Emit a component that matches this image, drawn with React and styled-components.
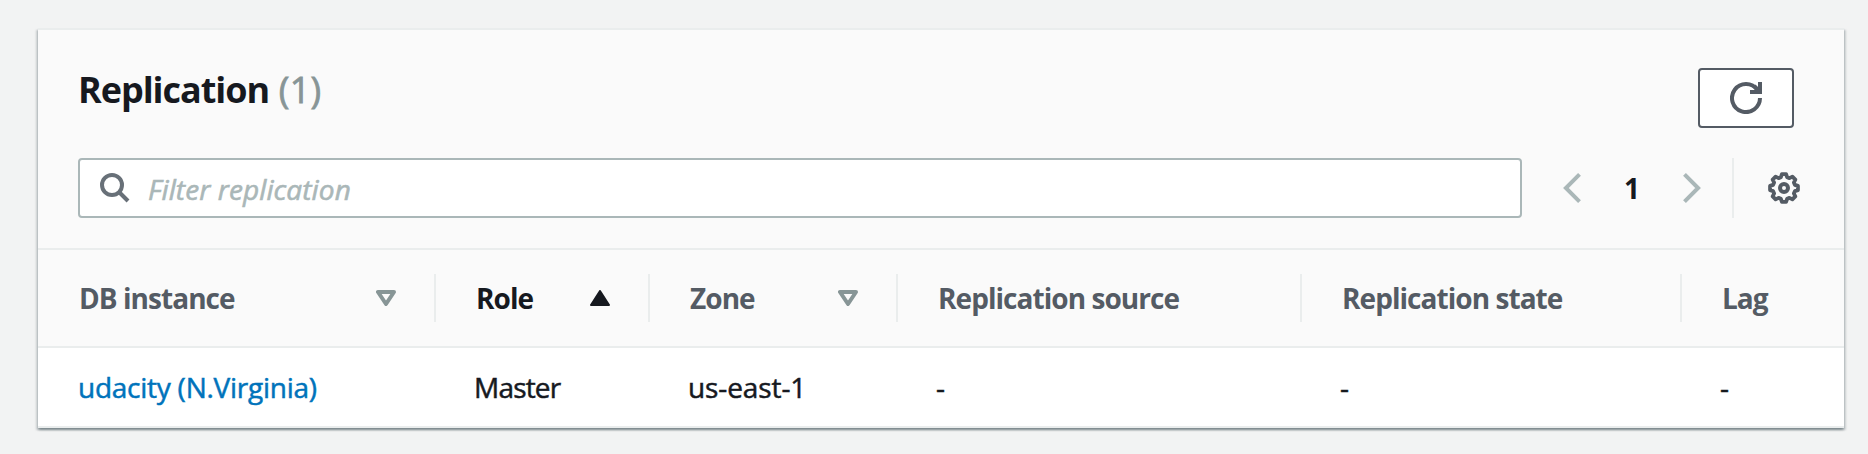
import React from "react";
import styled, { createGlobalStyle } from "styled-components";

const GlobalStyle = createGlobalStyle`
  * { box-sizing: border-box; }
  body {
    margin: 0;
    background: #f2f3f3;
    color: #16191f;
    font-family: "Open Sans", "Noto Sans", sans-serif;
    font-size: 28px;
    line-height: 44px;
  }
`;

const Page = styled.main`
  height: 454px;
  padding: 28px 24px 0 38px;
`;

const Card = styled.section`
  border-top: 2px solid #eaeded;
  background: #fff;
  box-shadow: 0 2px 2px 0 rgba(0, 28, 36, 0.3), 2px 2px 2px 0 rgba(0, 28, 36, 0.15),
    -2px 2px 2px 0 rgba(0, 28, 36, 0.15);
`;

const Header = styled.header`
  height: 220px;
  padding: 38px 40px 0;
  background: #fafafa;
  border-bottom: 2px solid #eaeded;
`;

const TitleRow = styled.div`
  display: flex;
  justify-content: space-between;
  align-items: flex-start;
  padding-right: 10px;
`;

const Title = styled.h2`
  margin: 0;
  font-size: 36px;
  line-height: 43px;
  font-weight: 700;
  letter-spacing: -1.05px;
  word-spacing: 1.5px;
`;

const Counter = styled.span`
  color: #879596;
  font-weight: 400;
  letter-spacing: 0.2px;
  -webkit-text-stroke: 0.8px #879596;
`;

const RefreshButton = styled.button`
  display: flex;
  align-items: center;
  justify-content: center;
  width: 96px;
  height: 60px;
  padding: 0;
  border: 2px solid #545b64;
  border-radius: 4px;
  background: #fff;
  color: #545b64;
`;

const Toolbar = styled.div`
  display: flex;
  align-items: center;
  height: 60px;
  margin-top: 30px;
`;

const SearchBox = styled.label`
  display: flex;
  align-items: center;
  width: 1444px;
  height: 60px;
  padding-left: 20px;
  border: 2px solid #aab7b8;
  border-radius: 4px;
  background: #fff;
  color: #687078;
`;

const SearchInput = styled.input`
  flex: 1;
  height: 46px;
  margin-left: 18px;
  padding: 2px 0 0;
  border: 0;
  outline: 0;
  background: transparent;
  font: inherit;
  letter-spacing: 0.1px;
  &::placeholder {
    color: #aab7b8;
    font-style: italic;
    opacity: 1;
    -webkit-text-stroke: 0.6px #aab7b8;
  }
`;

const Pagination = styled.nav`
  display: flex;
  align-items: center;
  justify-content: space-between;
  width: 138px;
  margin: 0 1px 0 41px;
  color: #aab7b8;
`;

const PageNumber = styled.span`
  color: #16191f;
  font-weight: 700;
`;

const Settings = styled.div`
  display: flex;
  align-items: center;
  height: 60px;
  margin-left: 30px;
  padding-left: 34px;
  border-left: 2px solid #eaeded;
  color: #545b64;
`;

const GRID = "398px 214px 248px 404px 380px 1fr";

const HeadRow = styled.div`
  display: grid;
  grid-template-columns: ${GRID};
  align-items: center;
  height: 98px;
  background: #fafafa;
  border-bottom: 2px solid #eaeded;
`;

const HeadCell = styled.div`
  display: flex;
  align-items: center;
  justify-content: space-between;
  height: 48px;
  padding: 0 38px 0 ${(p) => (p.$first ? 41 : 40)}px;
  border-right: ${(p) => (p.$last ? "0" : "2px solid #eaeded")};
  color: ${(p) => (p.$active ? "#16191f" : "#545b64")};
  font-weight: 700;
  letter-spacing: -0.95px;
  white-space: nowrap;
`;

const BodyRow = styled.div`
  display: grid;
  grid-template-columns: ${GRID};
  align-items: center;
  height: 80px;
  border-bottom: 2px solid #eaeded;
`;

const BodyCell = styled.div`
  padding-left: ${(p) => (p.$first ? 40 : 38)}px;
  letter-spacing: ${(p) => p.$tracking || "-0.25px"};
  white-space: nowrap;
  -webkit-text-stroke: 0.5px currentColor;
`;

const InstanceLink = styled.a`
  color: #0073bb;
  text-decoration: none;
  -webkit-text-stroke: 0.5px #0073bb;
`;

const SearchIcon = () => (
  <svg width="30" height="30" viewBox="0 0 30 30" fill="none" stroke="currentColor" strokeWidth="4">
    <circle cx="12" cy="12" r="10" />
    <path d="M19 19l9 9" />
  </svg>
);

const RefreshIcon = () => (
  <svg width="32" height="32" viewBox="0 0 32 32" fill="none" stroke="currentColor" strokeWidth="4">
    <path d="M30 16a14 14 0 1 1-2.6-8.1" />
    <path d="M20 10h10V0" />
    <path d="M24 4l6 6" />
  </svg>
);

const Chevron = ({ right }) => (
  <svg width="18" height="32" viewBox="0 0 18 32" fill="none" stroke="currentColor" strokeWidth="4">
    <path d={right ? "M1.5 2.4L15.1 16L1.5 29.6" : "M16.5 2.4L2.9 16l13.6 13.6"} />
  </svg>
);

// Eight teeth: each one has two outer corners and two corners in the gap after it.
const gearPoints = Array.from({ length: 8 }, (_, i) =>
  [[-8.5, 14.1], [8.5, 14.1], [16, 11.3], [29, 11.3]].map(([deg, r]) => {
    const a = ((i * 45 + deg - 90) * Math.PI) / 180;
    return `${(16 + r * Math.cos(a)).toFixed(2)},${(16 + r * Math.sin(a)).toFixed(2)}`;
  }).join(" ")
).join(" ");

const GearIcon = () => (
  <svg width="32" height="32" viewBox="0 0 32 32" fill="none" stroke="currentColor" strokeWidth="4">
    <polygon points={gearPoints} strokeWidth="3.8" strokeLinejoin="round" />
    <circle cx="16" cy="16" r="4" />
  </svg>
);

const SortIcon = ({ ascending }) => (
  <svg
    width="20"
    height="16"
    viewBox="0 0 20 16"
    fill={ascending ? "#16191f" : "none"}
    stroke={ascending ? "#16191f" : "#879596"}
    strokeWidth={ascending ? 2 : 4}
    strokeLinejoin="round"
  >
    <path d={ascending ? "M10 1L19 15H1Z" : "M2 2h16l-8 12z"} />
  </svg>
);

const columns = [
  { label: "DB instance", sort: "none" },
  { label: "Role", sort: "asc" },
  { label: "Zone", sort: "none" },
  { label: "Replication source" },
  { label: "Replication state" },
  { label: "Lag" },
];

const row = [
  { value: "udacity (N.Virginia)", href: "#" },
  { value: "Master", tracking: "-0.8px" },
  { value: "us-east-1", tracking: "-0.1px" },
  { value: "-" },
  { value: "-" },
  { value: "-" },
];

export default function App() {
  return (
    <Page>
      <GlobalStyle />
      <Card>
        <Header>
          <TitleRow>
            <Title>
              Replication <Counter>(1)</Counter>
            </Title>
            <RefreshButton aria-label="Refresh">
              <RefreshIcon />
            </RefreshButton>
          </TitleRow>
          <Toolbar>
            <SearchBox>
              <SearchIcon />
              <SearchInput placeholder="Filter replication" />
            </SearchBox>
            <Pagination>
              <Chevron />
              <PageNumber>1</PageNumber>
              <Chevron right />
            </Pagination>
            <Settings>
              <GearIcon />
            </Settings>
          </Toolbar>
        </Header>
        <HeadRow>
          {columns.map((c, i) => (
            <HeadCell key={c.label} $first={i === 0} $last={i === columns.length - 1} $active={c.sort === "asc"}>
              <span>{c.label}</span>
              {c.sort && <SortIcon ascending={c.sort === "asc"} />}
            </HeadCell>
          ))}
        </HeadRow>
        <BodyRow>
          {row.map((cell, i) => (
            <BodyCell key={i} $first={i === 0} $tracking={cell.tracking}>
              {cell.href ? <InstanceLink href={cell.href}>{cell.value}</InstanceLink> : cell.value}
            </BodyCell>
          ))}
        </BodyRow>
      </Card>
    </Page>
  );
}
